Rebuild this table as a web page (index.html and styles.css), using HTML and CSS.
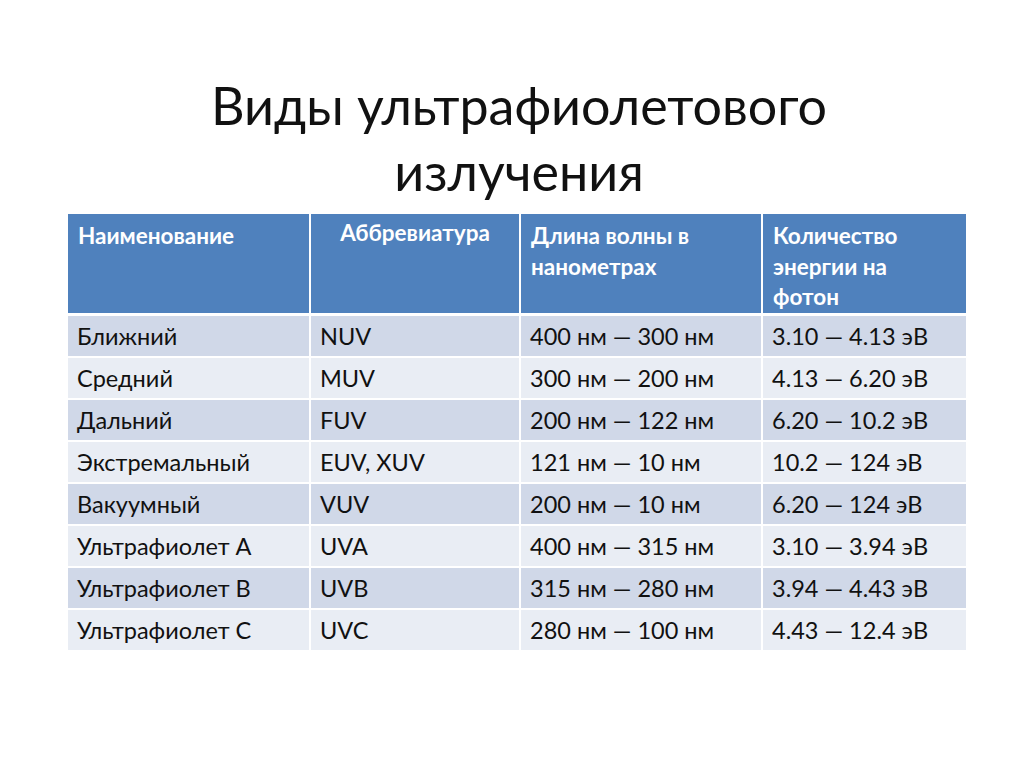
FILE: index.html
```html
<!DOCTYPE html>
<html lang="ru">
<head>
<meta charset="utf-8">
<title>Виды ультрафиолетового излучения</title>
<link rel="stylesheet" href="styles.css">
</head>
<body>
<div class="slide">
  <h1 class="title">Виды ультрафиолетового<br>излучения</h1>
  <div class="table">
    <div class="th">Наименование</div>
    <div class="th center">Аббревиатура</div>
    <div class="th">Длина волны в нанометрах</div>
    <div class="th">Количество энергии на фотон</div>

    <div class="td dark">Ближний</div><div class="td dark">NUV</div><div class="td dark">400 нм — 300 нм</div><div class="td dark">3.10 — 4.13 эВ</div>
    <div class="td light">Средний</div><div class="td light">MUV</div><div class="td light">300 нм — 200 нм</div><div class="td light">4.13 — 6.20 эВ</div>
    <div class="td dark">Дальний</div><div class="td dark">FUV</div><div class="td dark">200 нм — 122 нм</div><div class="td dark">6.20 — 10.2 эВ</div>
    <div class="td light">Экстремальный</div><div class="td light">EUV, XUV</div><div class="td light">121 нм — 10 нм</div><div class="td light">10.2 — 124 эВ</div>
    <div class="td dark">Вакуумный</div><div class="td dark">VUV</div><div class="td dark">200 нм — 10 нм</div><div class="td dark">6.20 — 124 эВ</div>
    <div class="td light">Ультрафиолет A</div><div class="td light">UVA</div><div class="td light">400 нм — 315 нм</div><div class="td light">3.10 — 3.94 эВ</div>
    <div class="td dark">Ультрафиолет B</div><div class="td dark">UVB</div><div class="td dark">315 нм — 280 нм</div><div class="td dark">3.94 — 4.43 эВ</div>
    <div class="td light">Ультрафиолет C</div><div class="td light">UVC</div><div class="td light">280 нм — 100 нм</div><div class="td light">4.43 — 12.4 эВ</div>
  </div>
</div>
</body>
</html>
```
FILE: styles.css
```css
html, body {
  margin: 0;
  padding: 0;
  background: #ffffff;
}
body {
  font-family: Lato, "Open Sans", "Liberation Sans", sans-serif;
  color: #111111;
}
.slide {
  width: 1024px;
  height: 767px;
  box-sizing: border-box;
  padding-top: 72px;
  padding-left: 68px;
}
.title {
  margin: 0 0 0 -68px;
  width: 1038px;
  text-align: center;
  font-weight: 400;
  font-size: 52px;
  line-height: 66px;
  color: #111111;
  height: 142px;
}
.table {
  display: grid;
  grid-template-columns: 241px 208px 240px 203px;
  grid-template-rows: 100px repeat(8, 40px);
  column-gap: 2px;
  row-gap: 2px;
  width: 898px;
}
.th {
  background: #4f81bd;
  color: #ffffff;
  font-weight: 700;
  font-size: 22.5px;
  line-height: 30.5px;
  padding: 7px 10px 0 10px;
  margin-bottom: 1px;
}
.th.center {
  text-align: center;
  padding-top: 4px;
}
.td {
  font-size: 23.5px;
  line-height: 41px;
  padding: 0 9px;
  white-space: nowrap;
}
.dark { background: #d0d8e8; }
.light { background: #e9edf4; }
```
